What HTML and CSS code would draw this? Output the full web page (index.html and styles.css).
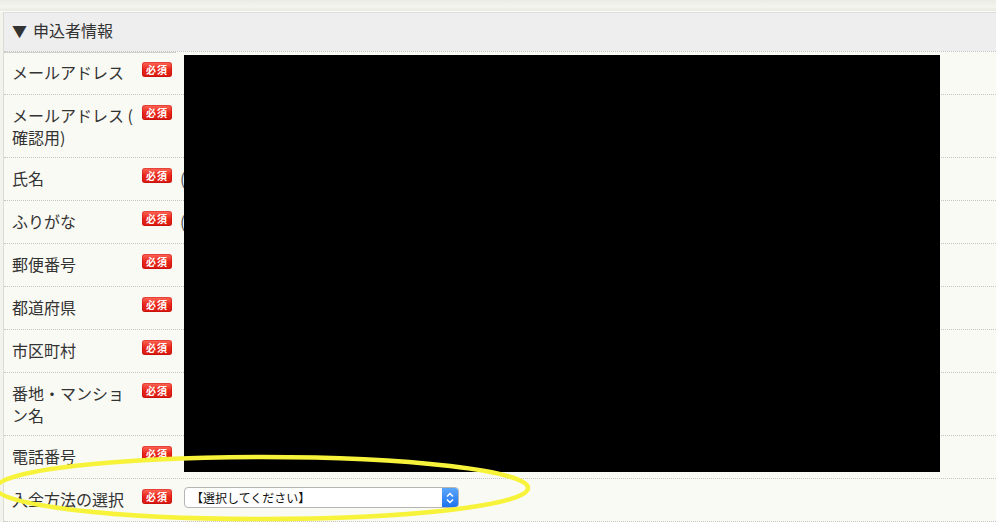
FILE: index.html
```html
<!DOCTYPE html>
<html lang="ja">
<head>
<meta charset="utf-8">
<title>申込者情報</title>
<link rel="stylesheet" href="styles.css">
</head>
<body>
<div class="topbar"></div>
<section class="panel">
  <h2 class="panel-head"><span class="tri">▼</span>申込者情報</h2>
  <div class="rows">
    <div class="row first">
      <div class="th"><span class="lbl">メールアドレス</span><span class="req">必須</span></div>
      <div class="td"></div>
    </div>
    <div class="row two">
      <div class="th"><span class="lbl">メールアドレス (<br>確認用)</span><span class="req">必須</span></div>
      <div class="td"></div>
    </div>
    <div class="row">
      <div class="th"><span class="lbl">氏名</span><span class="req">必須</span></div>
      <div class="td"><span class="paren">(</span></div>
    </div>
    <div class="row">
      <div class="th"><span class="lbl">ふりがな</span><span class="req">必須</span></div>
      <div class="td"><span class="paren">(</span></div>
    </div>
    <div class="row">
      <div class="th"><span class="lbl">郵便番号</span><span class="req">必須</span></div>
      <div class="td"></div>
    </div>
    <div class="row">
      <div class="th"><span class="lbl">都道府県</span><span class="req">必須</span></div>
      <div class="td"></div>
    </div>
    <div class="row">
      <div class="th"><span class="lbl">市区町村</span><span class="req">必須</span></div>
      <div class="td"></div>
    </div>
    <div class="row two">
      <div class="th"><span class="lbl">番地・マンション名</span><span class="req">必須</span></div>
      <div class="td"></div>
    </div>
    <div class="row">
      <div class="th"><span class="lbl">電話番号</span><span class="req">必須</span></div>
      <div class="td"></div>
    </div>
    <div class="row">
      <div class="th"><span class="lbl">入金方法の選択</span><span class="req">必須</span></div>
      <div class="td td-select">
        <div class="select">
          <span class="select-text">【選択してください】</span>
          <span class="select-btn">
            <svg width="16" height="20" viewBox="0 0 16 20"><path d="M5 8.5 L8 5.5 L11 8.5" fill="none" stroke="#fff" stroke-width="1.5"/><path d="M5 11.5 L8 14.5 L11 11.5" fill="none" stroke="#fff" stroke-width="1.5"/></svg>
          </span>
        </div>
      </div>
    </div>
  </div>
</section>
<div class="redact"></div>
<svg class="mark" width="996" height="522" viewBox="0 0 996 522"><ellipse cx="262" cy="488" rx="266" ry="31" fill="none" stroke="#f7f33a" stroke-width="4.5"/></svg>
</body>
</html>
```
FILE: styles.css
```css
html, body {
  margin: 0;
  padding: 0;
}
body {
  width: 996px;
  height: 522px;
  overflow: hidden;
  position: relative;
  background: #f3f3ed;
  font-family: "Noto Sans CJK JP", "Noto Sans", sans-serif;
  color: #333;
}
.topbar {
  height: 11px;
  background: linear-gradient(#ecece6, #f4f4ee 60%, #e9e9e3);
  border-bottom: 1px solid #fbfbf7;
}
.panel {
  margin-left: 3px;
  width: 1000px;
  border-left: 1px solid #dcdcd6;
  border-top: 1px solid #dddddd;
  background: #fafaf4;
}
.panel-head {
  margin: 0;
  height: 34px;
  line-height: 34px;
  padding: 0 0 4px 8px;
  font-size: 16px;
  font-weight: normal;
  background: #eeeeee;
  color: #333;
}
.tri {
  display: inline-block;
  width: 21px;
  font-size: 15px;
}
.row {
  display: grid;
  grid-template-columns: 172px 1fr;
  border-bottom: 1px dotted #c4c4c4;
}
.row.first .th {
  box-shadow: inset 0 1px 0 #cfcfcf;
}
.row.first {
  border-top: 1px dotted #c4c4c4;
}
.th {
  display: flex;
  align-items: flex-start;
  padding: 9px 0 11px 8px;
  font-size: 16px;
  line-height: 22px;
}
.row.two .th {
  padding-bottom: 9px;
}
.lbl {
  width: 126px;
  flex: none;
}
.req {
  flex: none;
  margin-left: 4px;
  margin-top: 1px;
  width: 30px;
  height: 15px;
  line-height: 15px;
  border-radius: 3px;
  background: linear-gradient(#ff6a5a, #e8261b 50%, #d81a10);
  box-shadow: inset 0 0 0 1px rgba(180, 0, 0, 0.35);
  color: #fff;
  font-size: 10px;
  font-weight: bold;
  text-align: center;
  letter-spacing: 1px;
}
.td {
  padding: 9px 0 0 4px;
  font-size: 16px;
  line-height: 22px;
}
.paren {
  color: #555;
}
.td-select {
  padding: 8px 0 0 8px;
}
.select {
  display: flex;
  width: 275px;
  height: 21px;
  box-sizing: border-box;
  border: 1px solid #b5b5b5;
  border-radius: 4px;
  background: #fff;
  overflow: hidden;
}
.select-text {
  flex: 1;
  font-size: 12px;
  line-height: 19px;
  padding-left: 6px;
  color: #111;
}
.select-btn {
  width: 16px;
  display: flex;
  align-items: center;
  justify-content: center;
  background: linear-gradient(#5aa6fb, #1d72ef);
}
.redact {
  position: absolute;
  left: 184px;
  top: 55px;
  width: 756px;
  height: 417px;
  background: #000;
}
.mark {
  position: absolute;
  left: 0;
  top: 0;
  pointer-events: none;
}
```
